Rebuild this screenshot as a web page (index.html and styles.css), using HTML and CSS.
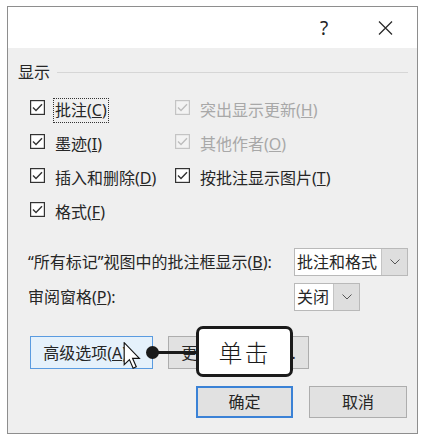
FILE: index.html
```html
<!DOCTYPE html>
<html lang="zh-CN">
<head>
<meta charset="utf-8">
<title>修订选项</title>
<link rel="stylesheet" href="styles.css">
</head>
<body>
<div class="dialog">
  <div class="titlebar">
    <span class="help">?</span>
    <svg class="close" width="15" height="14" viewBox="0 0 15 14"><path d="M1 0.5 L14 13.5 M14 0.5 L1 13.5" stroke="#2b2b2b" stroke-width="1.3" fill="none"/></svg>
  </div>
  <div class="content">
    <div class="group-head"><span class="group-title">显示</span><span class="group-line"></span></div>
    <div class="checks">
      <div class="check">
        <svg class="box" width="15" height="15" viewBox="0 0 15 15"><rect x="0.6" y="0.6" width="13.8" height="13.8" fill="#fff" stroke="#333" stroke-width="1.2"/><path d="M3 7.6 L6 10.6 L12 4.2" stroke="#333" stroke-width="1.4" fill="none"/></svg>
        <span class="lbl focus">批注(<u>C</u>)</span>
      </div>
      <div class="check disabled">
        <svg class="box" width="15" height="15" viewBox="0 0 15 15"><rect x="0.6" y="0.6" width="13.8" height="13.8" fill="#f3f3f3" stroke="#c4c4c4" stroke-width="1.2"/><path d="M3 7.6 L6 10.6 L12 4.2" stroke="#bdbdbd" stroke-width="1.4" fill="none"/></svg>
        <span class="lbl">突出显示更新(<u>H</u>)</span>
      </div>
      <div class="check">
        <svg class="box" width="15" height="15" viewBox="0 0 15 15"><rect x="0.6" y="0.6" width="13.8" height="13.8" fill="#fff" stroke="#333" stroke-width="1.2"/><path d="M3 7.6 L6 10.6 L12 4.2" stroke="#333" stroke-width="1.4" fill="none"/></svg>
        <span class="lbl">墨迹(<u>I</u>)</span>
      </div>
      <div class="check disabled">
        <svg class="box" width="15" height="15" viewBox="0 0 15 15"><rect x="0.6" y="0.6" width="13.8" height="13.8" fill="#f3f3f3" stroke="#c4c4c4" stroke-width="1.2"/><path d="M3 7.6 L6 10.6 L12 4.2" stroke="#bdbdbd" stroke-width="1.4" fill="none"/></svg>
        <span class="lbl">其他作者(<u>O</u>)</span>
      </div>
      <div class="check">
        <svg class="box" width="15" height="15" viewBox="0 0 15 15"><rect x="0.6" y="0.6" width="13.8" height="13.8" fill="#fff" stroke="#333" stroke-width="1.2"/><path d="M3 7.6 L6 10.6 L12 4.2" stroke="#333" stroke-width="1.4" fill="none"/></svg>
        <span class="lbl">插入和删除(<u>D</u>)</span>
      </div>
      <div class="check">
        <svg class="box" width="15" height="15" viewBox="0 0 15 15"><rect x="0.6" y="0.6" width="13.8" height="13.8" fill="#fff" stroke="#333" stroke-width="1.2"/><path d="M3 7.6 L6 10.6 L12 4.2" stroke="#333" stroke-width="1.4" fill="none"/></svg>
        <span class="lbl">按批注显示图片(<u>T</u>)</span>
      </div>
      <div class="check">
        <svg class="box" width="15" height="15" viewBox="0 0 15 15"><rect x="0.6" y="0.6" width="13.8" height="13.8" fill="#fff" stroke="#333" stroke-width="1.2"/><path d="M3 7.6 L6 10.6 L12 4.2" stroke="#333" stroke-width="1.4" fill="none"/></svg>
        <span class="lbl">格式(<u>F</u>)</span>
      </div>
    </div>

    <div class="field first">
      <span class="field-label">“所有标记”视图中的批注框显示(<u>B</u>):</span>
      <div class="combo wide">
        <span class="combo-text">批注和格式</span>
        <span class="combo-btn"><svg width="10" height="6" viewBox="0 0 10 6"><path d="M0.5 0.5 L5 5 L9.5 0.5" stroke="#555" stroke-width="1" fill="none"/></svg></span>
      </div>
    </div>
    <div class="field second">
      <span class="field-label">审阅窗格(<u>P</u>):</span>
      <div class="combo narrow">
        <span class="combo-text">关闭</span>
        <span class="combo-btn"><svg width="10" height="6" viewBox="0 0 10 6"><path d="M0.5 0.5 L5 5 L9.5 0.5" stroke="#555" stroke-width="1" fill="none"/></svg></span>
      </div>
    </div>

    <div class="btn-row">
      <button class="btn hover adv">高级选项(<u>A</u>)...</button>
      <button class="btn user">更改用户名(<u>N</u>)...</button>
    </div>
    <div class="action-row">
      <button class="btn default ok">确定</button>
      <button class="btn cancel">取消</button>
    </div>
  </div>

  <svg class="cursor" width="18" height="27" viewBox="0 0 12 19"><path d="M0.5 0.5 L0.5 16 L4.2 12.4 L6.8 18.4 L9 17.4 L6.4 11.5 L11.2 11.5 Z" fill="#fff" stroke="#111" stroke-width="0.8" stroke-linejoin="miter"/></svg>
  <span class="pin-line"></span>
  <span class="pin-dot"></span>
  <div class="callout">单击</div>
</div>
</body>
</html>
```

FILE: styles.css
```css
html, body {
  margin: 0;
  padding: 0;
  background: #ffffff;
}

body {
  font-family: "Noto Sans", "Noto Sans CJK SC", sans-serif;
  font-size: 16px;
  color: #262626;
  width: 425px;
  height: 441px;
  overflow: hidden;
}

.dialog {
  position: relative;
  box-sizing: border-box;
  margin: 6px 0 0 7px;
  width: 411px;
  height: 428px;
  border: 1px solid #8e8e8e;
  background: #efefef;
}

.titlebar {
  height: 41px;
  background: #ffffff;
  display: flex;
  align-items: center;
  justify-content: flex-end;
  padding-right: 24px;
}

.help {
  width: 20px;
  text-align: center;
  font-size: 19px;
  line-height: 24px;
  color: #222;
  margin-right: 44px;
  margin-top: 1px;
}

.close {
  display: block;
}

.content {
  display: flex;
  flex-direction: column;
  padding: 12px 9px 0 10px;
}

.group-head {
  display: flex;
  align-items: center;
  height: 24px;
  line-height: 24px;
}

.group-title {
  color: #262626;
}

.group-line {
  flex: 1;
  height: 0;
  border-top: 1px solid #d6d6d6;
  margin-left: 7px;
  margin-top: 1px;
}

.checks {
  display: grid;
  grid-template-columns: 145px auto;
  grid-auto-rows: 34px;
  margin: 9px 0 0 12px;
}

.check {
  display: flex;
  align-items: center;
}

.box {
  display: block;
  flex: none;
  margin-bottom: 6px;
}

.lbl {
  margin-left: 8px;
  padding: 0 1px;
  border: 1px solid transparent;
  line-height: 23px;
  white-space: nowrap;
}

.lbl.focus {
  border: 1px dotted #333;
}

.check.disabled .lbl {
  color: #a8a8a8;
}

.field {
  display: flex;
  align-items: center;
  height: 28px;
  padding-left: 10px;
}

.field.first {
  margin-top: 19px;
}

.field.second {
  margin-top: 7px;
}

.field-label {
  width: 266px;
  flex: none;
  white-space: nowrap;
  line-height: 24px;
}

.combo {
  box-sizing: border-box;
  height: 28px;
  display: flex;
  border: 1px solid #b9b9b9;
  background: #ffffff;
}

.combo.wide {
  width: 114px;
}

.combo.narrow {
  width: 66px;
}

.combo-text {
  flex: 1;
  padding-left: 2px;
  line-height: 26px;
  white-space: nowrap;
  overflow: hidden;
}

.combo-btn {
  flex: none;
  width: 25px;
  background: #dedede;
  border-left: 1px solid #c4c4c4;
  display: flex;
  align-items: center;
  justify-content: center;
}

.combo-btn svg {
  display: block;
}

.btn {
  box-sizing: border-box;
  font-family: "Noto Sans", "Noto Sans CJK SC", sans-serif;
  font-size: 16px;
  color: #262626;
  background: #e1e1e1;
  border: 1px solid #adadad;
  padding: 0;
  margin: 0;
  line-height: 24px;
  white-space: nowrap;
}

.btn-row {
  display: flex;
  gap: 15px;
  margin: 25px 0 0 12px;
}

.adv {
  width: 123px;
  height: 33px;
}

.user {
  width: 141px;
  height: 33px;
}

.btn.hover {
  background: #e5f1fb;
  border-color: #5a9be0;
}

.action-row {
  display: flex;
  justify-content: flex-end;
  gap: 16px;
  margin: 17px 1px 0 0;
}

.ok, .cancel {
  height: 32px;
}

.ok {
  width: 97px;
}

.cancel {
  width: 98px;
}

.btn.default {
  border: 2px solid #3b82d6;
}

/* annotation overlay */
.cursor {
  position: absolute;
  left: 115px;
  top: 335px;
}

.pin-line {
  position: absolute;
  left: 145px;
  top: 344px;
  width: 46px;
  height: 3px;
  background: #1a1a1a;
}

.pin-dot {
  position: absolute;
  left: 138px;
  top: 339px;
  width: 13px;
  height: 13px;
  border-radius: 50%;
  background: #1a1a1a;
}

.callout {
  position: absolute;
  left: 188px;
  top: 319px;
  box-sizing: border-box;
  width: 97px;
  height: 51px;
  border: 3px solid #1a1a1a;
  border-radius: 7px;
  background: #ffffff;
  font-family: "Noto Sans CJK SC", sans-serif;
  font-size: 24px;
  font-weight: 300;
  line-height: 45px;
  text-align: center;
  color: #1a1a1a;
  letter-spacing: 2px;
}
```
